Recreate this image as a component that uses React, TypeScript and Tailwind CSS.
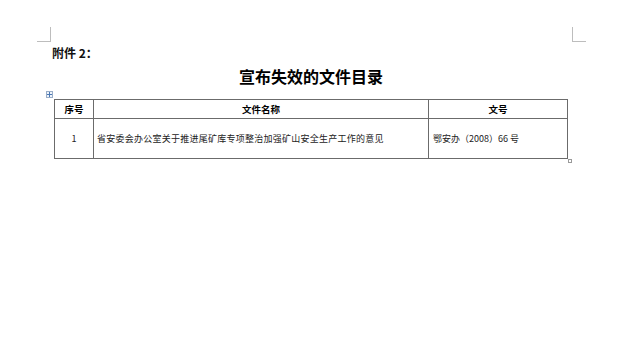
import React from "react";

const cjk = { fontFamily: '"Noto Sans CJK SC", "Noto Sans", sans-serif' };

export default function App() {
  return (
    <div className="w-[640px] h-[340px] bg-white overflow-hidden text-black" style={cjk}>
      <div className="flex justify-between pt-[27px] pl-[37px] pr-[54px]">
        <div className="w-[14px] h-[15px] border-r border-b border-[#bdbdbd]" />
        <div className="w-[14px] h-[15px] border-l border-b border-[#bdbdbd]" />
      </div>
      <div className="ml-[52px] mt-[4px] text-[12px] leading-[14px] font-bold text-[#111]">附件 2：</div>
      <div className="ml-[54px] w-[514px] mt-[6px] text-center text-[16px] leading-[20px] font-bold">
        宣布失效的文件目录
      </div>
      <div className="relative ml-[54px] mt-[13px] w-[514px]">
        <div className="absolute left-[-8px] top-[-8px] w-[7px] h-[7px] border border-[#9aaec8] bg-[#eef3fa] flex items-center justify-center">
          <svg width="5" height="5" viewBox="0 0 5 5">
            <path d="M2.5 0V5M0 2.5H5" stroke="#4a78b5" strokeWidth="1" />
          </svg>
        </div>
        <div className="grid grid-cols-[39px_335px_139px] border-l border-t border-[#6b6b6b]">
          <div className="h-[19px] border-r border-b border-[#6b6b6b] flex items-center justify-center text-[9.5px] font-bold">序号</div>
          <div className="h-[19px] border-r border-b border-[#6b6b6b] flex items-center justify-center text-[9.5px] font-bold">文件名称</div>
          <div className="h-[19px] border-r border-b border-[#6b6b6b] flex items-center justify-center text-[9.5px] font-bold">文号</div>
          <div className="h-[40px] border-r border-b border-[#6b6b6b] flex items-center justify-center text-[9px] text-[#222]">1</div>
          <div className="h-[40px] border-r border-b border-[#6b6b6b] flex items-center pl-[3px] text-[9px] tracking-[0.25px] text-[#222]">
            省安委会办公室关于推进尾矿库专项整治加强矿山安全生产工作的意见
          </div>
          <div className="h-[40px] border-r border-b border-[#6b6b6b] flex items-center pl-[4px] text-[9px] text-[#222]">
            鄂安办（2008）66 号
          </div>
        </div>
        <div className="absolute right-[-4px] bottom-[-4px] w-[4px] h-[4px] border border-[#9a9a9a] bg-white" />
      </div>
    </div>
  );
}
